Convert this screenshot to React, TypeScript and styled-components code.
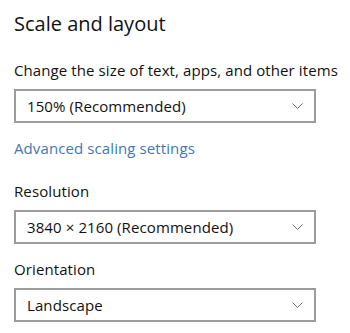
import React from 'react';
import styled, { createGlobalStyle } from 'styled-components';

const GlobalStyle = createGlobalStyle`
  html, body {
    margin: 0;
    padding: 0;
    background: #ffffff;
  }
  body {
    font-family: "Open Sans", "Noto Sans", "Liberation Sans", sans-serif;
    color: #111111;
  }
`;

type Option = { label: string; value: string };

const Select = ({ value }: { value: string }) => (
  <StyledSelect>
    <StyledValue>{value}</StyledValue>
    <Chevron width="11" height="6" viewBox="0 0 11 6">
      <path d="M0.5 0.5 L5.5 5.5 L10.5 0.5" fill="none" stroke="#6b6b6b" strokeWidth="1" />
    </Chevron>
  </StyledSelect>
);

export default function App() {
  const groups: Option[] = [
    { label: 'Resolution', value: '3840 × 2160 (Recommended)' },
    { label: 'Orientation', value: 'Landscape' },
  ];

  return (
    <>
      <GlobalStyle />
      <StyledPage>
        <StyledTitle>Scale and layout</StyledTitle>
        <StyledLabel $top={22}>Change the size of text, apps, and other items</StyledLabel>
        <Select value="150% (Recommended)" />
        <StyledLink href="#">Advanced scaling settings</StyledLink>
        {groups.map((g, i) => (
          <React.Fragment key={g.label}>
            <StyledLabel $top={i === 0 ? 23 : 15}>{g.label}</StyledLabel>
            <Select value={g.value} />
          </React.Fragment>
        ))}
      </StyledPage>
    </>
  );
}

const StyledPage = styled.div`
  display: flex;
  flex-direction: column;
  align-items: flex-start;
  padding: 10px 0 0 14px;
`;

const StyledTitle = styled.h1`
  margin: 0;
  font-size: 20px;
  line-height: 28px;
  font-weight: 400;
`;

const StyledLabel = styled.div<{ $top: number }>`
  margin-top: ${(p) => p.$top}px;
  font-size: 15px;
  line-height: 20px;
  letter-spacing: 0.1px;
  white-space: nowrap;
`;

const StyledSelect = styled.div`
  box-sizing: border-box;
  margin-top: 9px;
  width: 302px;
  height: 34px;
  border: 2px solid #9c9c9c;
  display: flex;
  align-items: center;
  justify-content: space-between;
  padding: 0 11px 0 11px;
`;

const StyledValue = styled.span`
  font-size: 15px;
  line-height: 20px;
  letter-spacing: 0.1px;
`;

const Chevron = styled.svg`
  display: block;
`;

const StyledLink = styled.a`
  margin-top: 15px;
  font-size: 15px;
  line-height: 20px;
  letter-spacing: 0.1px;
  color: #4079b3;
  text-decoration: none;
`;
